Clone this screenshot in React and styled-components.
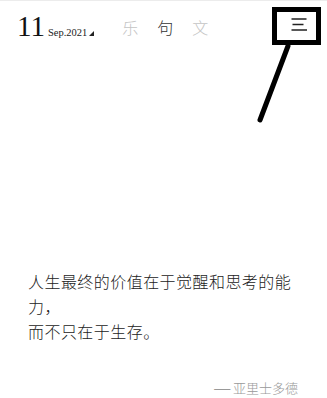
import React from 'react';
import styled, { createGlobalStyle } from 'styled-components';

const GlobalStyle = createGlobalStyle`
  html, body {
    margin: 0;
    padding: 0;
    background: #fff;
  }
  body {
    font-family: "Liberation Serif", "Noto Sans CJK SC", serif;
    color: #222;
  }
`;

const navItems = [
  { label: '乐', active: false },
  { label: '句', active: true },
  { label: '文', active: false },
];

const App = () => (
  <Page>
    <GlobalStyle />
    <Header>
      <DateBlock>
        <Day>11</Day>
        <Month>Sep.2021</Month>
        <Corner />
      </DateBlock>
      <Nav>
        {navItems.map(item => (
          <NavItem key={item.label} active={item.active}>{item.label}</NavItem>
        ))}
      </Nav>
      <MenuButton>
        <svg width="16" height="13" viewBox="0 0 16 13">
          <path d="M0.5 1H15.5M1.5 6.5H12.5M0.5 12H16" stroke="#222" strokeWidth="1.5" fill="none" />
        </svg>
      </MenuButton>
    </Header>
    <Pointer width="40" height="82" viewBox="0 0 40 82">
      <line x1="33" y1="3" x2="5" y2="77" stroke="#000" strokeWidth="5" strokeLinecap="round" />
    </Pointer>
    <Quote>
      人生最终的价值在于觉醒和思考的能力，
      <br />
      而不只在于生存。
    </Quote>
    <Author>
      <Dash>—</Dash> 亚里士多德
    </Author>
  </Page>
);

export default App;

const Page = styled.div`
  position: relative;
  width: 327px;
  height: 398px;
  border-top: 1px solid #ececec;
  box-sizing: border-box;
  overflow: hidden;
`;

const Header = styled.header`
  display: flex;
  align-items: center;
  height: 38px;
  margin-top: 6px;
  padding-left: 17px;
`;

const DateBlock = styled.div`
  display: flex;
  align-items: baseline;
`;

const Day = styled.span`
  font-size: 29px;
  line-height: 1;
  color: #111;
`;

const Month = styled.span`
  font-size: 10.5px;
  margin-left: 3px;
  color: #222;
`;

const Corner = styled.span`
  width: 0;
  height: 0;
  margin-left: 2px;
  border-left: 5px solid transparent;
  border-bottom: 5px solid #222;
`;

const Nav = styled.nav`
  display: flex;
  gap: 19px;
  margin-left: 28px;
  padding-top: 2px;
`;

const NavItem = styled.span`
  font-family: "Noto Sans CJK SC", sans-serif;
  font-weight: 300;
  font-size: 16px;
  color: ${p => (p.active ? '#333' : '#c4c4c4')};
`;

const MenuButton = styled.div`
  margin-left: auto;
  margin-right: 6px;
  width: 49px;
  height: 38px;
  box-sizing: border-box;
  border: 5px solid #000;
  display: flex;
  align-items: center;
  justify-content: center;
  padding: 0 0 3px 4px;
`;

const Pointer = styled.svg`
  position: absolute;
  left: 255px;
  top: 42px;
`;

const Quote = styled.p`
  margin: 224px 0 0;
  padding: 0 28px;
  font-family: "Noto Sans CJK SC", sans-serif;
  font-weight: 300;
  font-size: 16px;
  letter-spacing: 0.45px;
  line-height: 25px;
  color: #222;
`;

const Author = styled.div`
  margin-top: 36px;
  padding-right: 29px;
  text-align: right;
  font-family: "Noto Sans CJK SC", sans-serif;
  font-weight: 300;
  font-size: 13px;
  line-height: 16px;
  color: #999;
`;

const Dash = styled.span`
  font-family: "Liberation Serif", serif;
  font-size: 16px;
`;
